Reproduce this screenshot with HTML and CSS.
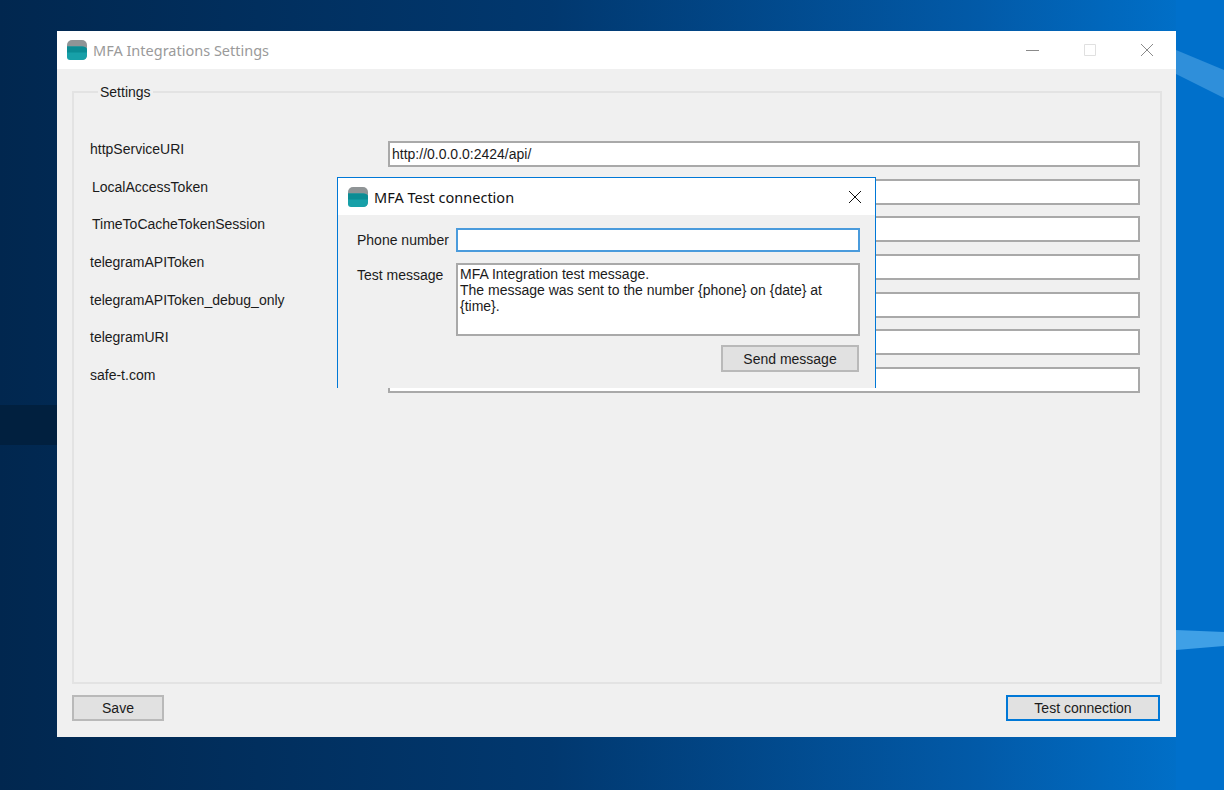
FILE: index.html
```html
<!DOCTYPE html>
<html lang="en">
<head>
    <meta charset="UTF-8" />
    <meta name="viewport" content="width=device-width, initial-scale=1.0" />
    <title>MFA Integrations Settings</title>
    <link rel="stylesheet" href="styles.css">
</head>
<body>
    <svg class="wallpaper" viewBox="0 0 1224 790" preserveAspectRatio="none" aria-hidden="true">
        <defs>
            <linearGradient id="wallBase" x1="0" y1="0" x2="1" y2="0">
                <stop offset="0" stop-color="#01274f" />
                <stop offset="0.45" stop-color="#01386f" />
                <stop offset="0.8" stop-color="#025aa8" />
                <stop offset="1" stop-color="#0074cf" />
            </linearGradient>
        </defs>
        <rect width="1224" height="790" fill="url(#wallBase)" />
        <rect x="1176" width="48" height="790" fill="#0070cb" />
        <polygon points="1176,50 1224,70 1224,98 1176,74" fill="#2f8fda" />
        <polygon points="1176,630 1224,632 1224,646 1176,650" fill="#3fa0e6" />
        <rect y="405" width="57" height="40" fill="#01203f" />
    </svg>

    <div class="window main-window">
        <div class="titlebar">
            <svg class="app-icon" viewBox="0 0 20 20"><use href="#logo" /></svg>
            <span class="title title-inactive">MFA Integrations Settings</span>
            <div class="caption-buttons">
                <svg class="caption-icon" viewBox="0 0 14 14"><path d="M0 7.5H13" /></svg>
                <svg class="caption-icon caption-disabled" viewBox="0 0 14 14"><path d="M1.5 1.5H12.500V12.500H1.500Z" /></svg>
                <svg class="caption-icon" viewBox="0 0 14 14"><path d="M1 1L13 13M13 1L1 13" /></svg>
            </div>
        </div>
        <div class="window-body">
            <fieldset class="group">
                <legend>Settings</legend>
                <div class="field-row"><label>httpServiceURI</label><input class="text-input" type="text" value="http://0.0.0.0:2424/api/" /></div>
                <div class="field-row"><label class="nudged">LocalAccessToken</label><input class="text-input" type="text" /></div>
                <div class="field-row"><label class="nudged">TimeToCacheTokenSession</label><input class="text-input" type="text" /></div>
                <div class="field-row"><label>telegramAPIToken</label><input class="text-input" type="text" /></div>
                <div class="field-row"><label>telegramAPIToken_debug_only</label><input class="text-input" type="text" /></div>
                <div class="field-row"><label>telegramURI</label><input class="text-input" type="text" /></div>
                <div class="field-row"><label>safe-t.com</label><input class="text-input" type="text" /></div>
            </fieldset>
            <div class="footer">
                <button class="btn btn-save">Save</button>
                <button class="btn btn-test">Test connection</button>
            </div>
        </div>
    </div>

    <div class="window dialog">
        <div class="titlebar dialog-titlebar">
            <svg class="app-icon" viewBox="0 0 20 20">
                <g id="logo">
                    <rect width="20" height="20" rx="5" fill="#8f9496" />
                    <path d="M0 6.500H15Q20 6.500 20 10V15Q20 20 15 20H3Q0 20 0 17Z" fill="#17a0a8" />
                    <path d="M0 6.500H15Q20 6.500 20 10V12.500H0Z" fill="#0b8c94" />
                </g>
            </svg>
            <span class="title">MFA Test connection</span>
            <svg class="dialog-close" viewBox="0 0 14 14"><path d="M1 1L13 13M13 1L1 13" /></svg>
        </div>
        <div class="dialog-body">
            <div class="dialog-row">
                <label>Phone number</label>
                <input class="text-input phone-input" type="text" />
            </div>
            <div class="dialog-row">
                <label>Test message</label>
                <textarea class="text-input message-input">MFA Integration test message.
The message was sent to the number {phone} on {date} at {time}.</textarea>
            </div>
            <div class="dialog-actions">
                <button class="btn btn-send">Send message</button>
            </div>
        </div>
    </div>
</body>
</html>
```
FILE: styles.css
```css
* {
    box-sizing: border-box;
}
body {
    margin: 0;
    width: 1224px;
    height: 790px;
    overflow: hidden;
    position: relative;
    font-family: "Liberation Sans", Arial, sans-serif;
    font-size: 14px;
    color: #1b1b1b;
}
.wallpaper {
    position: absolute;
    left: 0;
    top: 0;
    width: 1224px;
    height: 790px;
}
.window {
    position: absolute;
    background-color: #f0f0f0;
}
.main-window {
    left: 57px;
    top: 31px;
    width: 1119px;
    height: 706px;
    display: flex;
    flex-direction: column;
}
.titlebar {
    height: 38px;
    flex: none;
    background-color: #fff;
    display: flex;
    align-items: center;
    padding-left: 10px;
}
.app-icon {
    width: 20px;
    height: 20px;
    flex: none;
}
.title {
    margin-left: 6px;
    font-family: "Noto Sans", sans-serif;
    font-size: 14.5px;
    color: #111;
}
.title-inactive {
    color: #9a9a9a;
}
.caption-buttons {
    margin-left: auto;
    margin-right: 22px;
    display: flex;
    gap: 43px;
}
.caption-icon {
    width: 14px;
    height: 14px;
    fill: none;
    stroke: #8a8a8a;
    stroke-width: 1;
}
.caption-disabled {
    stroke: #e0e0e0;
}
.window-body {
    flex: 1;
    display: flex;
    flex-direction: column;
    padding: 15px 15px 16px;
}
.group {
    margin: 0;
    padding: 41px 20px 0 16px;
    height: 600px;
    flex: none;
    border: 2px solid #e3e3e3;
    display: flex;
    flex-direction: column;
    gap: 12px;
}
.group legend {
    margin-left: 8px;
    padding: 0 2px;
    line-height: 16px;
}
.field-row {
    display: flex;
    align-items: flex-start;
    height: 25.670px;
}
.field-row label {
    width: 298px;
    flex: none;
    line-height: 17px;
}
.field-row label.nudged {
    padding-left: 2px;
}
.text-input {
    display: block;
    margin: 0;
    border: 2px solid #a9a9a9;
    background-color: #fff;
    font: inherit;
    color: inherit;
    padding: 1px 2px;
    outline: none;
}
.field-row .text-input {
    width: 752px;
    height: 26px;
}
.footer {
    margin-top: 11px;
    display: flex;
    justify-content: space-between;
    padding-right: 1px;
}
.btn {
    font: inherit;
    color: inherit;
    background-color: #e1e1e1;
    border: 2px solid #b9b9b9;
    padding: 0;
    height: 26px;
}
.btn-save {
    width: 92px;
}
.btn-test {
    width: 154px;
    border-color: #0078d7;
}
.dialog {
    left: 337px;
    top: 177px;
    width: 539px;
    height: 211px;
    border: 1px solid #0078d7;
    border-bottom: 0;
    display: flex;
    flex-direction: column;
}
.dialog-titlebar {
    height: 37px;
}
.dialog-close {
    margin-left: auto;
    margin-right: 13px;
    width: 14px;
    height: 14px;
    fill: none;
    stroke: #111;
    stroke-width: 1;
}
.dialog-body {
    padding: 13px 15px 0 19px;
    display: flex;
    flex-direction: column;
    gap: 11px;
}
.dialog-row {
    display: flex;
    align-items: flex-start;
}
.dialog-row label {
    width: 99px;
    flex: none;
    padding-top: 4px;
    line-height: 17px;
}
.phone-input {
    width: 404px;
    height: 24px;
    border-color: #4a9bdc;
}
.message-input {
    width: 404px;
    height: 73px;
    resize: none;
    overflow: hidden;
    line-height: 16px;
}
.dialog-actions {
    margin-top: -2px;
    display: flex;
    justify-content: flex-end;
    padding-right: 1px;
}
.btn-send {
    width: 138px;
    height: 27px;
}
```
